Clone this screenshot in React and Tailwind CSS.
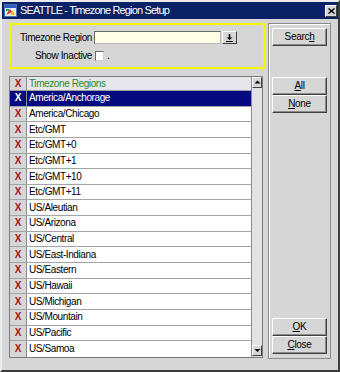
const regions = [
  "America/Anchorage",
  "America/Chicago",
  "Etc/GMT",
  "Etc/GMT+0",
  "Etc/GMT+1",
  "Etc/GMT+10",
  "Etc/GMT+11",
  "US/Aleutian",
  "US/Arizona",
  "US/Central",
  "US/East-Indiana",
  "US/Eastern",
  "US/Hawaii",
  "US/Michigan",
  "US/Mountain",
  "US/Pacific",
  "US/Samoa",
];

function AppIcon() {
  return (
    <svg width="13" height="13" viewBox="0 0 13 13">
      <rect x="0.5" y="0.5" width="12" height="12" fill="#e8eef8" stroke="#4a6fb5" />
      <rect x="1" y="1" width="11" height="3" fill="#2a5bc8" />
      <path d="M2 11 L6 5 L8 8 Z" fill="#d42a2a" />
      <path d="M6 11 L9 6 L11 11 Z" fill="#f2c200" />
      <rect x="2" y="5" width="3" height="2" fill="#2ea043" />
    </svg>
  );
}

function Button({ children, className = "" }) {
  return (
    <button
      className={`w-[55px] h-[18px] bg-[#d6d6d6] border border-t-white border-l-white border-b-[#404040] border-r-[#404040] shadow-[inset_-1px_-1px_0_#8a8a8a] text-[10px] tracking-[-0.3px] text-black leading-none flex items-center justify-center ${className}`}
    >
      {children}
    </button>
  );
}

function XMark({ light }) {
  return (
    <span className={`font-bold text-[10px] leading-none ${light ? "text-white" : "text-[#a01818]"}`}>
      X
    </span>
  );
}

export default function App() {
  return (
    <div className="w-[340px] h-[372px] bg-[#d6d6d6] border-2 border-t-[#ececec] border-l-[#ececec] border-b-[#3c3c3c] border-r-[#3c3c3c] flex flex-col font-['Liberation_Sans',Arial,sans-serif] text-black overflow-hidden">
      {/* title bar */}
      <div className="h-[17px] bg-[#0b2266] flex items-center pl-[2px] pr-[1px]">
        <AppIcon />
        <span className="ml-[3px] text-white text-[11px] tracking-[-0.85px] leading-none">
          SEATTLE - Timezone Region Setup
        </span>
        <div className="ml-auto w-[12px] h-[12px] bg-[#d6d6d6] border border-t-white border-l-white border-b-[#404040] border-r-[#404040] flex items-center justify-center">
          <svg width="7" height="6" viewBox="0 0 7 6">
            <path d="M0.5 0.5 L6.5 5.5 M6.5 0.5 L0.5 5.5" stroke="#000" strokeWidth="1.4" />
          </svg>
        </div>
      </div>

      <div className="flex pt-[4px] pl-[7px]">
        {/* left side */}
        <div className="w-[256px] flex flex-col">
          <div className="h-[46px] border-2 border-[#f5f500] pt-[6px] flex flex-col gap-[6px]">
            <div className="flex items-center h-[13px]">
              <span className="w-[81px] text-right text-[10px] tracking-[-0.4px] leading-none">
                Timezone Region
              </span>
              <div className="ml-[2px] w-[127px] h-[13px] bg-[#ffffe8] border border-t-[#6a6a6a] border-l-[#6a6a6a] border-b-[#b8b8b8] border-r-[#b8b8b8]" />
              <div className="ml-[1px] w-[15px] h-[13px] bg-[#d6d6d6] border border-t-white border-l-white border-b-[#404040] border-r-[#404040] flex items-center justify-center">
                <svg width="7" height="8" viewBox="0 0 7 8">
                  <path d="M3.5 0 V4" stroke="#000" strokeWidth="1.6" />
                  <path d="M0.5 3.5 H6.5 L3.5 6 Z" fill="#000" />
                  <path d="M0 7.5 H7" stroke="#000" strokeWidth="1" />
                </svg>
              </div>
            </div>
            <div className="flex items-center h-[11px]">
              <span className="w-[81px] text-right text-[10px] tracking-[-0.4px] leading-none">
                Show Inactive
              </span>
              <div className="ml-[3px] w-[9px] h-[10px] bg-white border border-t-[#6a6a6a] border-l-[#6a6a6a] border-b-[#cfcfcf] border-r-[#cfcfcf]" />
              <span className="ml-[3px] text-[10px] leading-none">.</span>
            </div>
          </div>

          {/* grid */}
          <div className="mt-[7px] w-[254px] h-[282px] border border-[#7c7c7c] flex">
            <div className="flex-1 flex flex-col">
              <div className="h-[14px] flex border-b border-[#9c9c9c]">
                <div className="w-[17px] bg-[#d6d6d6] border-r border-[#8c8c8c] flex items-center justify-center">
                  <XMark />
                </div>
                <div className="flex-1 bg-[#e6e6ec] pl-[2px] flex items-center text-[10px] tracking-[-0.4px] text-[#2c8a2c] leading-none">
                  Timezone Regions
                </div>
              </div>
              {regions.map((name, i) => {
                const sel = i === 0;
                return (
                  <div
                    key={name}
                    className={`h-[15.65px] flex ${i < regions.length - 1 ? "border-b border-[#a4a4a4]" : ""}`}
                  >
                    <div
                      className={`w-[17px] border-r border-[#8c8c8c] flex items-center justify-center ${
                        sel ? "bg-[#060a80]" : "bg-[#d6d6d6]"
                      }`}
                    >
                      <XMark light={sel} />
                    </div>
                    <div
                      className={`flex-1 pl-[2px] flex items-center text-[10px] tracking-[-0.4px] leading-none ${
                        sel ? "bg-[#060a80] text-white" : "bg-white"
                      }`}
                    >
                      {name}
                    </div>
                  </div>
                );
              })}
            </div>
            {/* scrollbar */}
            <div className="w-[11px] bg-[#e2e2e2] border-l border-[#8c8c8c] flex flex-col justify-between">
              <div className="h-[11px] bg-[#d6d6d6] border border-t-white border-l-white border-b-[#404040] border-r-[#404040] flex items-center justify-center">
                <svg width="7" height="5" viewBox="0 0 7 5">
                  <path d="M0.5 3.5 H6.5 L3.5 0.5 Z" fill="#000" />
                </svg>
              </div>
              <div className="h-[11px] mb-[1px] bg-[#d6d6d6] border border-t-white border-l-white border-b-[#404040] border-r-[#404040] flex items-center justify-center">
                <svg width="7" height="5" viewBox="0 0 7 5">
                  <path d="M0.5 1 H6.5 L3.5 4 Z" fill="#000" />
                </svg>
              </div>
            </div>
          </div>
        </div>

        {/* right button panel */}
        <div className="ml-[3px] w-[63px] h-[336px] border border-[#8a8a8a] shadow-[inset_1px_1px_0_#ffffff] flex flex-col items-center pt-[4px] pb-[4px]">
          <Button>
            Searc<span className="underline">h</span>
          </Button>
          <Button className="mt-[31px]">
            <span className="underline">A</span>ll
          </Button>
          <Button>
            <span className="underline">N</span>one
          </Button>
          <div className="flex-1" />
          <Button>
            <span className="underline">O</span>K
          </Button>
          <Button>
            <span className="underline">C</span>lose
          </Button>
        </div>
      </div>
    </div>
  );
}
